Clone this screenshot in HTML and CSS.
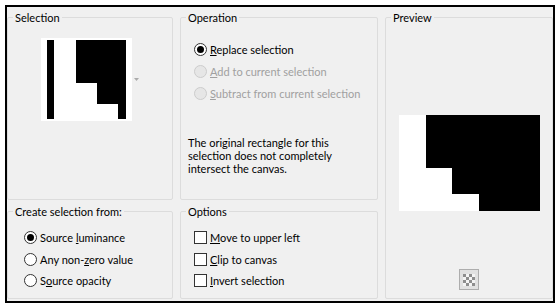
FILE: index.html
```html
<!DOCTYPE html>
<html lang="en">
<head>
<meta charset="utf-8">
<title>Selection from image</title>
<link rel="stylesheet" href="styles.css">
</head>
<body>
<div class="dialog">
  <fieldset class="group g-selection">
    <legend>Selection</legend>
    <div class="thumb-row">
      <svg class="thumb" width="91" height="83" viewBox="0 0 91 83">
        <rect width="91" height="83" fill="#fff"/>
        <rect x="6" y="2" width="7" height="79" fill="#000"/>
        <path d="M35 2H85V81H77V66H56V45H35Z" fill="#000"/>
      </svg>
      <svg class="drop" width="5" height="3" viewBox="0 0 5 3"><path d="M0 0H5L2.5 3Z" fill="#ababab"/></svg>
    </div>
  </fieldset>

  <fieldset class="group g-operation">
    <legend>Operation</legend>
    <div class="op-body">
      <div class="op-list">
        <label class="opt"><span class="radio checked"></span><span><u>R</u>eplace selection</span></label>
        <label class="opt disabled"><span class="radio"></span><span><u>A</u>dd to current selection</span></label>
        <label class="opt disabled"><span class="radio"></span><span><u>S</u>ubtract from current selection</span></label>
      </div>
      <p class="note">The original rectangle for this<br>selection does not completely<br>intersect the canvas.</p>
    </div>
  </fieldset>

  <fieldset class="group g-preview">
    <legend>Preview</legend>
    <div class="preview-body">
      <svg class="preview" width="141" height="96" viewBox="0 0 141 96">
        <rect width="141" height="96" fill="#fff"/>
        <path d="M27 0H141V96H80V79H53V53H27Z" fill="#000"/>
      </svg>
      <button class="bg-btn" type="button" aria-label="Background">
        <svg width="12" height="12" viewBox="0 0 12 12">
          <rect width="12" height="12" fill="#f4f4f4"/>
          <path d="M0 0h3v3H0zM6 0h3v3H6zM3 3h3v3H3zM9 3h3v3H9zM0 6h3v3H0zM6 6h3v3H6zM3 9h3v3H3zM9 9h3v3H9z" fill="#8e8e8e"/>
        </svg>
      </button>
    </div>
  </fieldset>

  <fieldset class="group g-create">
    <legend>Create selection from:</legend>
    <div class="create-list">
      <label class="opt row"><span class="radio checked"></span><span>Source <u>l</u>uminance</span></label>
      <label class="opt row"><span class="radio"></span><span>Any non-<u>z</u>ero value</span></label>
      <label class="opt row"><span class="radio"></span><span>S<u>o</u>urce opacity</span></label>
    </div>
  </fieldset>

  <fieldset class="group g-options">
    <legend>Options</legend>
    <div class="options-list">
      <label class="opt row"><span class="check"></span><span><u>M</u>ove to upper left</span></label>
      <label class="opt row"><span class="check"></span><span><u>C</u>lip to canvas</span></label>
      <label class="opt row"><span class="check"></span><span><u>I</u>nvert selection</span></label>
    </div>
  </fieldset>
</div>
</body>
</html>
```

FILE: styles.css
```css
* { box-sizing: border-box; }

html, body {
  margin: 0;
  padding: 0;
  background: #fff;
}

body {
  font-family: "Segoe UI", Lato, "Noto Sans", sans-serif;
  font-size: 11px;
  line-height: 13px;
  color: #000;
}

.dialog {
  margin: 5px;
  width: 550px;
  height: 298px;
  border: 2px solid #000;
  background: #f0f0f0;
  padding: 4px 0 0 0;
  display: grid;
  grid-template-columns: 166px 198px 168px;
  grid-template-rows: 189px 94px;
  column-gap: 7px;
  row-gap: 5px;
}

.group {
  margin: 0;
  padding: 0;
  border: 1px solid #dcdcdc;
  border-radius: 2px;
  min-width: 0;
}

.group legend {
  margin-left: 5px;
  padding: 0 2px;
  font-size: 11px;
  line-height: 13px;
}

.g-selection { grid-column: 1; grid-row: 1; }
.g-operation { grid-column: 2; grid-row: 1; }
.g-preview   { grid-column: 3; grid-row: 1 / span 2; }
.g-create    { grid-column: 1; grid-row: 2; }
.g-options   { grid-column: 2; grid-row: 2; }

/* Selection */
.thumb-row {
  padding-top: 14px;
  display: flex;
  justify-content: center;
  align-items: center;
  gap: 2px;
}
.thumb, .drop { display: block; }

/* Operation */
.op-body { padding: 14px 0 0 7px; }
.op-list { margin-left: 6px; }

.opt {
  display: flex;
  align-items: center;
  gap: 3px;
  height: 22px;
  white-space: nowrap;
}
.opt.row { height: 21.5px; }

.opt u { text-underline-offset: 1px; }

.opt.disabled { color: #a0a0a0; }

.radio {
  flex: none;
  width: 13px;
  height: 13px;
  border: 1px solid #333;
  border-radius: 50%;
  background: #fff;
  display: flex;
  align-items: center;
  justify-content: center;
}
.radio.checked::after {
  content: "";
  width: 7px;
  height: 7px;
  border-radius: 50%;
  background: #000;
}
.disabled .radio {
  border-color: #cccccc;
  background: #e6e6e6;
}

.check {
  flex: none;
  width: 13px;
  height: 13px;
  border: 1px solid #333;
  background: #fff;
}

.note {
  margin: 32px 0 0 0;
  line-height: 13px;
}

/* Create selection from */
.create-list { padding: 9px 0 0 16px; }

/* Options */
.options-list { padding: 9px 0 0 13px; }

/* Preview */
.preview-body {
  padding-top: 91px;
  display: flex;
  flex-direction: column;
  align-items: center;
}
.preview { display: block; }

.bg-btn {
  margin-top: 58px;
  width: 20px;
  height: 21px;
  padding: 0;
  border: 1px solid #adadad;
  background: #e1e1e1;
  display: flex;
  align-items: center;
  justify-content: center;
}
.bg-btn svg { display: block; }
```
